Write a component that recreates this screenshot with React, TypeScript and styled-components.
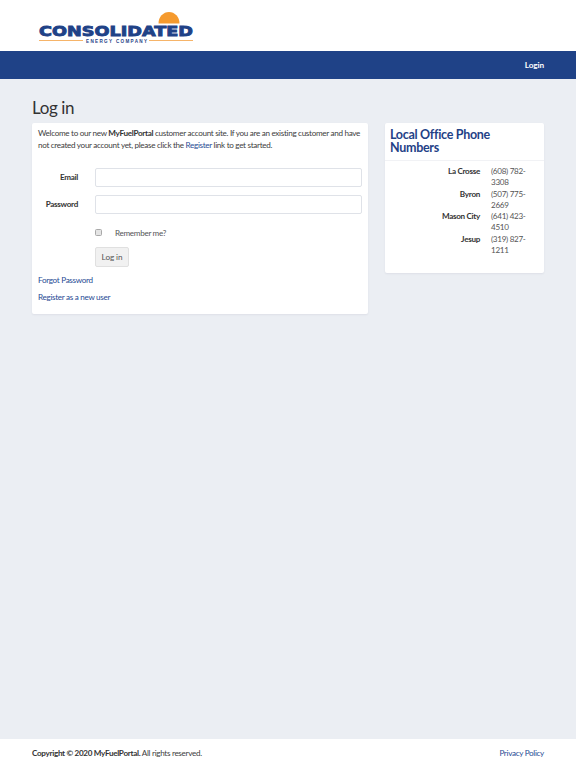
import React, { ReactElement } from 'react';
import styled, { createGlobalStyle } from 'styled-components';

const GlobalStyle = createGlobalStyle`
  html, body, #root {
    height: 100%;
    margin: 0;
  }

  body {
    font-family: Lato, "Noto Sans", sans-serif;
    font-size: 8.1px;
    letter-spacing: -0.3px;
    line-height: 15px;
    color: #404040;
    background: #ebeef3;
  }

  * {
    box-sizing: border-box;
  }
`;

const Page = styled.div`
  display: flex;
  flex-direction: column;
  height: 768px;
`;

const Header = styled.header`
  height: 51px;
  padding: 11px 0 0 38px;
  background: #fff;
`;

const NavBar = styled.nav`
  display: flex;
  align-items: center;
  justify-content: flex-end;
  height: 28px;
  padding: 0 32px;
  background: #1f4287;
`;

const NavLink = styled.a`
  font-size: 8.2px;
  font-weight: 700;
  letter-spacing: -0.1px;
  color: #fff;
`;

const Main = styled.main`
  flex: 1;
  padding: 15px 32px 0;
`;

const PageTitle = styled.h1`
  margin: 0 0 1px;
  font-size: 17px;
  font-weight: 400;
  letter-spacing: -0.4px;
  line-height: 28px;
  color: #333;
`;

const Columns = styled.div`
  display: flex;
  align-items: flex-start;
  gap: 17px;
`;

const Card = styled.section`
  background: #fff;
  border-radius: 2px;
  box-shadow: 0 1px 2px rgba(60, 70, 100, 0.08);
`;

const LoginCard = styled(Card)`
  width: 336px;
  height: 191px;
  padding: 5px 6px;
`;

const PhoneCard = styled(Card)`
  width: 159px;
  height: 150px;
`;

const Intro = styled.p`
  margin: 0 0 17px;
  line-height: 11.5px;
`;

const TextLink = styled.a`
  color: #274b94;
`;

const FormRow = styled.div`
  display: grid;
  grid-template-columns: 57px 1fr;
  align-items: center;
  height: 19px;
  margin-bottom: 8px;
`;

const FieldLabel = styled.label`
  padding-right: 17px;
  font-weight: 700;
  text-align: right;
  color: #333;
`;

const TextInput = styled.input`
  width: 267px;
  height: 19px;
  border: 1px solid #dfe2e8;
  border-radius: 2px;
  background: #fff;
`;

const RememberRow = styled.div`
  display: flex;
  align-items: center;
  gap: 13px;
  height: 12px;
  margin: 13px 0 8px 57px;
`;

const CheckBox = styled.span`
  display: block;
  width: 7px;
  height: 7px;
  margin-top: -1px;
  border: 1px solid #a9a9a9;
  border-radius: 1.5px;
  background: #e4e4e4;
`;

const RememberText = styled.span`
  color: #555;
`;

const SubmitButton = styled.button`
  display: block;
  width: 34px;
  height: 20px;
  margin: 0 0 8px 57px;
  padding: 0;
  border: 1px solid #e0e0e0;
  border-radius: 2px;
  background: #f1f1f1;
  color: #555;
  font-family: inherit;
  font-size: 8.2px;
  letter-spacing: -0.1px;
`;

const LinkLine = styled.p`
  margin: 0 0 6px;
  line-height: 11px;
`;

const PhoneHeading = styled.h2`
  margin: 0;
  padding: 5px 5px 6px;
  border-bottom: 1px solid #f1f2f5;
  font-size: 12.5px;
  font-weight: 700;
  letter-spacing: -0.3px;
  line-height: 13px;
  color: #1f4287;
`;

const PhoneList = styled.div`
  display: grid;
  grid-template-columns: 95px 42px;
  column-gap: 11px;
  padding-top: 5px;
  line-height: 11.25px;
`;

const OfficeName = styled.div`
  font-weight: 700;
  text-align: right;
  color: #333;
`;

const PhoneNumber = styled.div`
  color: #555;
`;

const Footer = styled.footer`
  display: flex;
  align-items: center;
  justify-content: space-between;
  height: 29px;
  padding: 0 32px;
  background: #fff;
`;

const Strong = styled.strong`
  color: #333;
`;

const offices = [
  { name: 'La Crosse', phone: '(608) 782-3308' },
  { name: 'Byron', phone: '(507) 775-2669' },
  { name: 'Mason City', phone: '(641) 423-4510' },
  { name: 'Jesup', phone: '(319) 827-1211' },
];

const Logo = (): ReactElement => (
  <svg width="156" height="33" viewBox="0 0 156 33" aria-label="Consolidated Energy Company">
    <path d="M120.5 12.5a10.5 11.5 0 0 1 21 0z" fill="#f59a2e" />
    <text
      x="1"
      y="25"
      fontFamily="'DejaVu Sans', sans-serif"
      fontSize="14.5"
      fontWeight="700"
      fill="#1f4287"
      stroke="#1f4287"
      strokeWidth="0.9"
      letterSpacing="0"
      textLength="154"
      lengthAdjust="spacingAndGlyphs"
    >
      CONSOLIDATED
    </text>
    <rect x="1" y="29" width="44" height="1" fill="#f6b469" />
    <rect x="111" y="29" width="44" height="1" fill="#f6b469" />
    <text
      x="48"
      y="31.5"
      fontFamily="'Liberation Sans', sans-serif"
      fontSize="4.6"
      fontWeight="700"
      fill="#1f4287"
      letterSpacing="0"
      textLength="61"
    >
      ENERGY COMPANY
    </text>
  </svg>
);

const App = (): ReactElement => (
  <Page>
    <GlobalStyle />
    <Header>
      <Logo />
    </Header>
    <NavBar>
      <NavLink>Login</NavLink>
    </NavBar>
    <Main>
      <PageTitle>Log in</PageTitle>
      <Columns>
        <LoginCard>
          <Intro>
            Welcome to our new <Strong>MyFuelPortal</Strong> customer account site. If you are an existing customer and have not created your account yet, please click the <TextLink>Register</TextLink> link to get started.
          </Intro>
          <FormRow>
            <FieldLabel>Email</FieldLabel>
            <TextInput />
          </FormRow>
          <FormRow>
            <FieldLabel>Password</FieldLabel>
            <TextInput />
          </FormRow>
          <RememberRow>
            <CheckBox />
            <RememberText>Remember me?</RememberText>
          </RememberRow>
          <SubmitButton>Log in</SubmitButton>
          <LinkLine><TextLink>Forgot Password</TextLink></LinkLine>
          <LinkLine><TextLink>Register as a new user</TextLink></LinkLine>
        </LoginCard>
        <PhoneCard>
          <PhoneHeading>Local Office Phone Numbers</PhoneHeading>
          <PhoneList>
            {offices.map((office) => (
              <React.Fragment key={office.name}>
                <OfficeName>{office.name}</OfficeName>
                <PhoneNumber>{office.phone}</PhoneNumber>
              </React.Fragment>
            ))}
          </PhoneList>
        </PhoneCard>
      </Columns>
    </Main>
    <Footer>
      <span><Strong>Copyright © 2020 MyFuelPortal.</Strong> All rights reserved.</span>
      <TextLink>Privacy Policy</TextLink>
    </Footer>
  </Page>
);

export default App;
